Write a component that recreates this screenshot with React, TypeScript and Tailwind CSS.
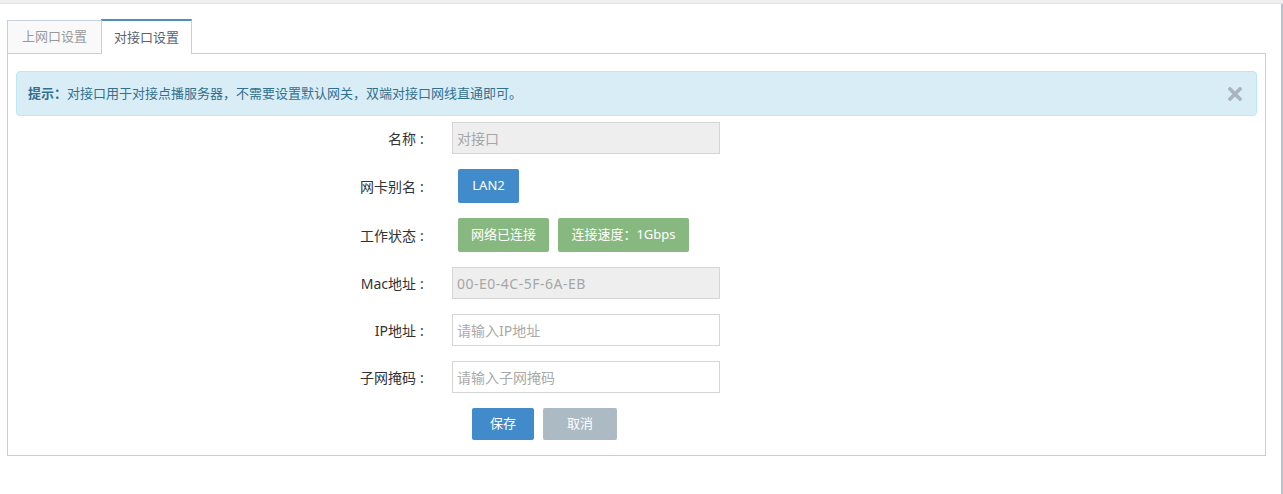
import React, { useState } from 'react';

const font = "font-['Noto_Sans','Noto_Sans_CJK_SC',sans-serif]";

const Row: React.FC<{ label: string; children: React.ReactNode }> = ({ label, children }) => (
  <div className="flex items-center mb-[15px]">
    <div className="w-[412px] text-right text-[14px] text-[#333]">
      {label}
      <span className="inline-block w-[12px] text-center">:</span>
    </div>
    <div className="ml-[24px] flex items-center">{children}</div>
  </div>
);

const App: React.FC = () => {
  const [tab, setTab] = useState<'up' | 'link'>('link');
  const [showTip, setShowTip] = useState(true);

  return (
    <div className={`min-h-[494px] bg-white ${font}`}>
      <div className="h-[4px] bg-[#efefef] border-b border-[#e2e2e2]" />
      <div className="min-h-[490px] border-r-2 border-[#b7c3d0] pl-[7px] pr-[15px] pt-[15px] pb-[36px]">
        {/* tabs */}
        <div className="flex items-end h-[35px]">
          <button
            onClick={() => setTab('up')}
            className={`w-[95px] border border-[#c5d0dc] text-[13px] ${tab === 'up' ? 'h-[35px] bg-white text-[#576373] border-t-2 border-t-[#4c8fbd] border-b-0' : 'h-[34px] bg-[#f9f9f9] text-[#999]'}`}
          >
            上网口设置
          </button>
          <button
            onClick={() => setTab('link')}
            className={`-ml-[1px] w-[91px] border border-[#c5d0dc] text-[13px] ${tab === 'link' ? 'h-[35px] bg-white text-[#576373] border-t-2 border-t-[#4c8fbd] border-b-0' : 'h-[34px] bg-[#f9f9f9] text-[#999]'}`}
          >
            对接口设置
          </button>
          <div className="flex-1 border-b border-[#c5d0dc]" />
        </div>

        <div className="border border-t-0 border-[#c5d0dc] px-[8px] pt-[17px] pb-[15px]">
          {showTip && (
            <div className="flex items-center h-[45px] mb-[6px] px-[11px] rounded-[4px] border border-[#bce8f1] bg-[#d9edf7] text-[13px] text-[#31708f]">
              <span className="font-bold">提示：</span>
              <span>对接口用于对接点播服务器，不需要设置默认网关，双端对接口网线直通即可。</span>
              <button onClick={() => setShowTip(false)} className="ml-auto mr-[3px]">
                <svg width="14" height="14" viewBox="0 0 14 14">
                  <path d="M2 2 L12 12 M12 2 L2 12" stroke="#a9b4bd" strokeWidth="3.6" strokeLinecap="square" />
                </svg>
              </button>
            </div>
          )}

          <Row label="名称">
            <input
              disabled
              value="对接口"
              className="w-[268px] h-[32px] px-[4px] border border-[#d5d5d5] bg-[#eee] text-[14px] text-[#a6a6a6]"
            />
          </Row>
          <Row label="网卡别名">
            <span className="ml-[6px] flex items-center justify-center w-[61px] h-[34px] rounded-[2px] bg-[#428bca] text-white text-[13px]">
              LAN2
            </span>
          </Row>
          <Row label="工作状态">
            <span className="ml-[6px] flex items-center justify-center w-[91px] h-[34px] rounded-[2px] bg-[#87b87f] text-white text-[13px]">
              网络已连接
            </span>
            <span className="ml-[9px] flex items-center justify-center w-[131px] h-[34px] rounded-[2px] bg-[#87b87f] text-white text-[13px]">
              连接速度：1Gbps
            </span>
          </Row>
          <Row label="Mac地址">
            <input
              disabled
              value="00-E0-4C-5F-6A-EB"
              className="w-[268px] h-[32px] px-[4px] border border-[#d5d5d5] bg-[#eee] text-[14px] tracking-[0.5px] text-[#a6a6a6]"
            />
          </Row>
          <Row label="IP地址">
            <input
              placeholder="请输入IP地址"
              className="w-[268px] h-[32px] px-[4px] border border-[#d5d5d5] bg-white text-[14px] text-[#555] placeholder:text-[#aaa] outline-none"
            />
          </Row>
          <Row label="子网掩码">
            <input
              placeholder="请输入子网掩码"
              className="w-[268px] h-[32px] px-[4px] border border-[#d5d5d5] bg-white text-[14px] text-[#555] placeholder:text-[#aaa] outline-none"
            />
          </Row>

          <div className="flex pl-[456px]">
            <button className="w-[62px] h-[32px] rounded-[2px] bg-[#428bca] text-white text-[13px]">保存</button>
            <button className="ml-[9px] w-[74px] h-[32px] rounded-[2px] bg-[#abbac3] text-white text-[13px]">取消</button>
          </div>
        </div>
      </div>
    </div>
  );
};

export default App;
